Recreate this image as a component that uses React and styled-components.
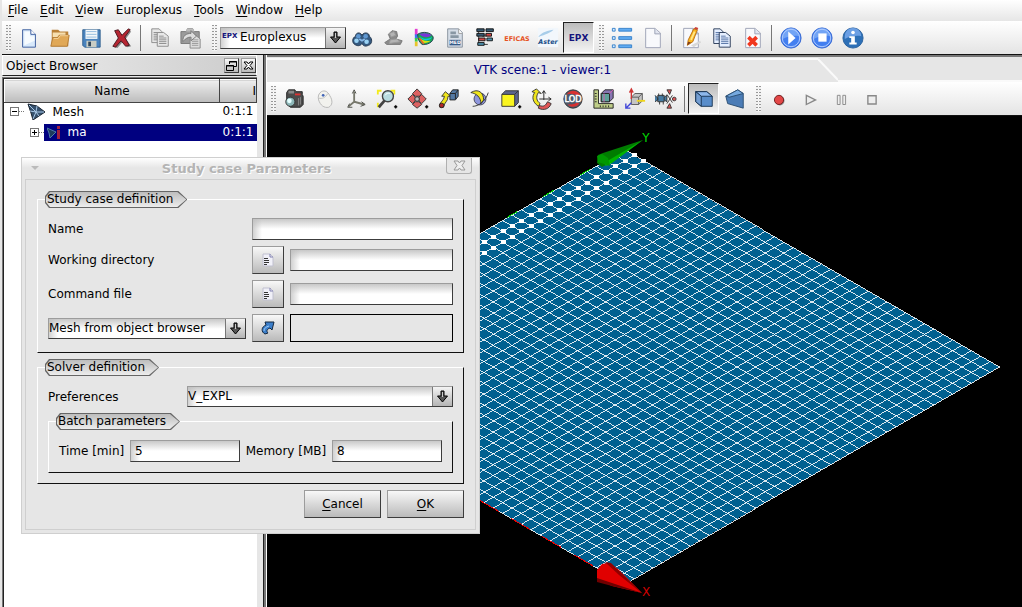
import React, { useState } from "react";
import styled, { createGlobalStyle, css } from "styled-components";

const GlobalStyle = createGlobalStyle`
  * {
    box-sizing: border-box;
  }
  body {
    margin: 0;
    background: #e6e6e6;
    color: #000;
    font-family: "DejaVu Sans", sans-serif;
    font-size: 12px;
    line-height: 16px;
  }
  button,
  input,
  select {
    font: inherit;
    color: inherit;
    margin: 0;
    border-radius: 0;
  }
`;

const raised = css`
  border: 1px solid #9c9c9c;
  border-right-color: #3c3c3c;
  border-bottom-color: #3c3c3c;
  background: linear-gradient(#f8f8f8, #bababa);
`;

const sunken = css`
  border: 1px solid #9c9c9c;
  border-right-color: #3c3c3c;
  border-bottom-color: #3c3c3c;
  background: linear-gradient(90deg, rgba(190, 190, 190, 0.7), rgba(255, 255, 255, 0) 9px),
    linear-gradient(#c8c8c8, #fff 10px);
`;

const Window = styled.div`
  display: flex;
  flex-direction: column;
  height: 100vh;
  overflow: hidden;
  padding-left: 2px;
`;

const MenuBar = styled.nav`
  display: flex;
  gap: 12px;
  height: 21px;
  padding: 2px 6px;
  background: linear-gradient(#fff, #e6e6e6);
  a {
    color: inherit;
    text-decoration: none;
  }
  u {
    text-underline-offset: 2px;
  }
`;

const ToolBar = styled.div`
  display: flex;
  align-items: center;
  flex: none;
  height: ${(props) => props.height}px;
  padding-left: 4px;
  background: linear-gradient(#fff, #e4e4e4);
`;

const MainToolBar = styled(ToolBar)`
  border-bottom: 1px solid #111;
`;

const Handle = styled.span`
  flex: none;
  width: 5px;
  height: 26px;
  margin: 0 ${(props) => props.after || 2}px 0 ${(props) => props.before || 0}px;
  background: repeating-linear-gradient(transparent 0 1px, #f2f2f2 1px 3px),
    linear-gradient(90deg, #999 2px, #fff 2px 3px, #999 3px);
`;

const Separator = styled.span`
  flex: none;
  width: 1px;
  height: 26px;
  margin: 0 3px;
  background: #777;
`;

const ToolButton = styled.button`
  flex: none;
  display: flex;
  align-items: center;
  justify-content: center;
  width: 31px;
  height: 31px;
  padding: 0;
  border: 1px solid transparent;
  background: none;
  ${(props) =>
    props.$pressed &&
    css`
      border-color: #222 #fff #fff #222;
      background: linear-gradient(#bcbcbc, #f4f4f4);
    `}
`;

const ComboBox = styled.span`
  display: grid;
  flex: none;
  height: ${(props) => props.height || 21}px;
  width: ${(props) => props.width || "auto"};
  ${sunken}
  select {
    grid-area: 1 / 1;
    appearance: none;
    min-width: 0;
    padding: 0 20px 1px ${(props) => props.$indent || 0}px;
    border: 0;
    outline: 0;
    background: none;
  }
`;

const ComboArrow = styled.span`
  grid-area: 1 / 1;
  justify-self: end;
  display: flex;
  align-items: center;
  justify-content: center;
  width: 20px;
  border-left: 1px solid #777;
  background: linear-gradient(#f4f4f4, #b4b4b4);
  pointer-events: none;
`;

const ComboMark = styled.span`
  grid-area: 1 / 1;
  padding-left: 1px;
  color: #14147c;
  font-size: 7px;
  font-weight: bold;
  line-height: 17px;
  pointer-events: none;
`;

const EpxLabel = styled.span`
  color: #14147c;
  font-size: 9px;
  font-weight: bold;
`;

const Main = styled.main`
  display: flex;
  flex: 1;
  min-height: 0;
`;

const Dock = styled.aside`
  display: flex;
  flex-direction: column;
  flex: none;
  width: 255px;
`;

const DockTitle = styled.header`
  display: flex;
  align-items: center;
  gap: 2px;
  flex: none;
  height: 21px;
  padding-left: 3px;
  border: 1px solid #fff;
  border-bottom-color: #222;
  background: linear-gradient(90deg, #eee, #ccc);
  h2 {
    flex: 1;
    margin: 0;
    font-size: 12px;
    font-weight: normal;
  }
`;

const DockButton = styled.button`
  display: flex;
  align-items: center;
  justify-content: center;
  width: 15px;
  height: 15px;
  padding: 0;
  ${raised}
`;

const TreeFrame = styled.div`
  flex: 1;
  margin-top: 1px;
  padding: 1px 0 0 1px;
  border-top: 1px solid #777;
  border-left: 1px solid #777;
  box-shadow: inset 1px 1px 0 #222;
  background: #fff;
  overflow: hidden;
`;

const Tree = styled.table`
  width: 100%;
  table-layout: fixed;
  border-collapse: collapse;
  th {
    height: 23px;
    padding: 0;
    border: 1px solid #fff;
    border-right-color: #444;
    border-bottom-color: #444;
    background: linear-gradient(#eee, #bcbcbc);
    font-weight: normal;
    overflow: hidden;
  }
  td {
    height: 21px;
    padding: 0;
    vertical-align: top;
  }
`;

const IdHeader = styled.th`
  width: 37px;
  text-align: right;
`;

const TreeCell = styled.div`
  display: flex;
  align-items: center;
  height: 17px;
  padding-left: ${(props) => props.$depth * 20 + 5}px;
`;

const NodeLabel = styled.span`
  display: flex;
  align-items: center;
  flex: 1;
  height: 17px;
  gap: 7px;
  padding-left: 3px;
  ${(props) => props.$selected && "background: #000080; color: #fff;"}
`;

const IdLabel = styled.div`
  height: 17px;
  padding-left: 3px;
  ${(props) => props.$selected && "background: #000080; color: #fff;"}
`;

const Expander = styled.button`
  display: flex;
  width: 9px;
  height: 9px;
  margin-right: 5px;
  padding: 0;
  border: 1px solid #777;
  background: #fff;
`;

const DottedLine = styled.span`
  width: 5px;
  margin-left: -5px;
  border-top: 1px dotted #777;
`;

const Splitter = styled.div`
  flex: none;
  width: 10px;
  border-right: 1px solid #fff;
  background: linear-gradient(90deg, #e6e6e6 6px, #222 6px 7px, #777 7px);
`;

const Viewer = styled.section`
  display: flex;
  flex-direction: column;
  flex: 1;
  min-width: 0;
  border-top: 2px solid #777;
`;

const TabBar = styled.div`
  display: flex;
  flex: none;
  height: 25px;
  padding-top: 1px;
  button {
    flex: 0 1 551px;
    padding: 0 0 2px;
    border: 0;
    border-top: 2px solid #fafafa;
    background: none;
    color: #000080;
  }
`;

const TabFill = styled.span`
  flex: 1;
  border-bottom: 2px solid #fafafa;
`;

const Scene = styled.div`
  flex: 1;
  min-height: 0;
  border-top: 1px solid #111;
  background: #000;
  > svg {
    display: block;
    width: 100%;
    height: 100%;
  }
`;

const Dialog = styled.form`
  position: absolute;
  left: 21px;
  top: 157px;
  display: flex;
  flex-direction: column;
  width: 459px;
  border: 1px solid #cfcfcf;
  padding: 0 3px 3px;
  background: #e6e6e6;
`;

const DialogTitle = styled.header`
  display: flex;
  align-items: flex-start;
  height: 21px;
  margin: 0 -3px;
  padding: 0 7px 0 9px;
  background: linear-gradient(#fff, #e6e6e6 10px);
  h1 {
    flex: 1;
    margin: 3px 0 0;
    padding-left: 8px;
    color: #b4b4b4;
    font-size: 13px;
    line-height: 16px;
    text-align: center;
    text-shadow: 1px 1px 0 #fff;
  }
  > svg {
    margin-top: 8px;
  }
`;

const DialogClose = styled.button`
  display: flex;
  align-items: center;
  justify-content: center;
  width: 26px;
  height: 16px;
  padding: 0;
  border: 1px solid #b0b0b0;
  border-top: 0;
  border-radius: 0 0 3px 3px;
  background: #e6e6e6;
`;

const DialogBody = styled.div`
  display: flex;
  flex-direction: column;
  border: 1px solid #cfcfcf;
  padding: 11px;
`;

const Group = styled.fieldset`
  min-width: 0;
  margin: ${(props) => props.$top || 0}px 0 0;
  padding: 10px;
  border: 1px solid #fff;
  border-right-color: #111;
  border-bottom-color: #111;
`;

const tagShape = "4px 0, calc(100% - 9px) 0, 100% 50%, calc(100% - 9px) 100%, 4px 100%, 0 calc(100% - 5px), 0 5px";

const Tag = styled.legend`
  height: 17px;
  margin-left: -3px;
  padding: 1px;
  background: #666;
  clip-path: polygon(${tagShape});
  span {
    display: block;
    height: 15px;
    padding: 0 13px 0 1px;
    line-height: 14px;
    background: linear-gradient(#bdbdbd, #ededed);
    clip-path: polygon(${tagShape});
  }
`;

const StudyGrid = styled.div`
  display: grid;
  grid-template-columns: 198px 32px 1fr;
  gap: 6px;
  align-items: center;
`;

const TextInput = styled.input`
  min-width: 0;
  width: 100%;
  height: 22px;
  padding: 0 4px;
  outline: 0;
  ${sunken}
  ${(props) => props.$wide && "grid-column: 2 / 4;"}
`;

const PlainInput = styled.input`
  min-width: 0;
  width: 100%;
  height: 28px;
  border: 1px solid #000;
  outline: 0;
  background: #e6e6e6;
`;

const IconButton = styled.button`
  display: flex;
  align-items: center;
  justify-content: center;
  height: 28px;
  padding: 0;
  ${raised}
`;

const PreferenceRow = styled.div`
  display: grid;
  grid-template-columns: 139px 1fr;
  align-items: center;
`;

const BatchRow = styled.div`
  display: grid;
  grid-template-columns: auto 110px auto 110px;
  justify-content: space-between;
  align-items: center;
`;

const Actions = styled.footer`
  display: flex;
  justify-content: flex-end;
  gap: 6px;
  margin-top: 6px;
`;

const ActionButton = styled.button`
  width: 77px;
  height: 28px;
  padding: 0;
  ${raised}
  u {
    text-underline-offset: 2px;
  }
`;

function Icon({ children }) {
  return (
    <svg width="22" height="22" viewBox="0 0 24 24" overflow="visible" aria-hidden="true">
      {children}
    </svg>
  );
}

const Arrow = () => (
  <svg width="13" height="13" viewBox="0 0 13 13">
    <path d="M5 1h3v5h3.500L6.500 12 1.500 6H5z" fill="#555" stroke="#000" />
    <path d="M6 2h1v5H6z" fill="#ccc" />
  </svg>
);

const fileIcons = {
  New: (
    <g>
      <path d="M5 3h9l5 5v14H5z" fill="#d8e9fb" stroke="#36589a" />
      <path d="M7 5h6v5h5v5L7 20z" fill="#f6fbff" />
      <path d="M14 3v5h5" fill="#fff" stroke="#36589a" />
    </g>
  ),
  Open: (
    <g>
      <path d="M3 3h7l2 2h9v16H3z" fill="#b98138" />
      <path d="M4 6h14v5H4z" fill="#f6dfb0" />
      <path d="M2 21l2-9h5l2-3h11l-2 12z" fill="#e0a857" stroke="#b27a30" />
      <path d="M5 12.500h5l2-3h9" fill="none" stroke="#f8d59a" />
    </g>
  ),
  Save: (
    <g>
      <path d="M3 3h19v19H5l-2-2z" fill="#4a83bd" stroke="#315f8e" />
      <path d="M6 3h13v10H6z" fill="#f6f9fb" />
      <path d="M7 5h11M7 8h11M7 11h11" stroke="#8fb9dc" />
      <path d="M7 15h11v7H7z" fill="#c9cdc4" />
      <path d="M9 16h3v5H9z" fill="#31475c" />
    </g>
  ),
  Delete: (
    <g>
      <path d="M8 5l6 6 6-7 2 1-6 8 6 8-4 1-5-6-6 7-3-1 6-9-5-7z" fill="#888" />
      <path d="M4 4l4-1 4 6 7-7 2 1-6 8 5 9-4 1-5-6-6 7-3-1 6-9z" fill="#b62632" stroke="#44151c" />
    </g>
  ),
};

const clipboardIcons = {
  Copy: (
    <g fill="#e8e8e8" stroke="#8a8a8a">
      <path d="M3 2h8l3 3v12H3z" />
      <path d="M5 6h5M5 8h5M5 10h5M5 12h5M5 14h5" />
      <path d="M9 6h7l5 4v11H9z" />
      <path d="M11 10h5M11 12h8M11 14h8M11 16h8M11 18h8" />
    </g>
  ),
  Paste: (
    <g>
      <path d="M1 5h6l1-3h6l1 3h6v13H1z" fill="#9b9b9b" stroke="#777" />
      <path d="M6 5h10l-2-3H8z" fill="#bbb" />
      <path d="M11 9h6l5 4v10H11z" fill="#ddd" stroke="#888" />
      <path d="M13 14h7M13 16h7M13 18h7M13 20h7" stroke="#999" />
      <path d="M3 16c0-7 4-9 9-9V4l6 6-6 5v-4c-4 0-6 2-9 5z" fill="#ddd" stroke="#777" />
    </g>
  ),
};

const moduleIcons = {
  Geometry: (
    <g>
      <path d="M5 10c0-4 5-5 7-1 2-4 8-3 8 1 4 3 3 9-1 10-4 2-6 0-7-2-2 3-5 3-8 1s-3-7 1-9z" fill="#345980" stroke="#20334a" />
      <circle cx="8" cy="10" r="2.500" fill="#5f97d0" />
      <circle cx="16" cy="10" r="2.500" fill="#5f97d0" />
      <circle cx="6" cy="15" r="2.500" fill="#9ad2f4" />
      <circle cx="17" cy="16" r="2.500" fill="#9ad2f4" />
      <path d="M9 13l3 2 3-2" fill="none" stroke="#88b9e8" strokeWidth="2" />
    </g>
  ),
  Mesh: (
    <g fill="#8a8a8a" stroke="#777">
      <path d="M3 17l6-4-2-5 4-4 5 1 1 5-2 3 7 2-2 4H5z" />
      <path d="M8 7l5-2 2 4-5 2zM9 14l7-1 4 3-12 2z" fill="#b4b4b4" stroke="#999" />
    </g>
  ),
  "Post-Pro": (
    <g>
      <path d="M2 2h3v7H2z" fill="#e33ed1" />
      <path d="M2 8h3v5H2z" fill="#3975f4" />
      <path d="M2 12h3v4H2z" fill="#35cf4c" />
      <path d="M2 16h3v5H2z" fill="#e8c52b" />
      <path d="M5 8c6-4 15-2 17 3 1 6-8 9-12 8-3-2-5-6-5-11z" fill="#17a85a" stroke="#23384e" />
      <path d="M7 8c4-2 11-1 13 1-3 3-9 3-13-1z" fill="#7a35d8" />
      <path d="M7 10c5 4 10 3 14 1-3 5-10 5-14-1z" fill="#0dc6e4" />
      <path d="M6 11l4 6c4 1 7 0 9-2-5 1-9 0-13-4z" fill="#d5df13" />
      <path d="M6 12l4 6 3 1-5-7z" fill="#f25a28" />
    </g>
  ),
  Med: (
    <g>
      <path d="M4 2h12l4 4v16H4z" fill="#d5dde7" stroke="#87919c" />
      <path d="M16 2v5h4" fill="#fff" stroke="#999" />
      <path d="M7 5h6v3H7zM7 9h9v3H7z" fill="#8897a4" />
      <path d="M6 14h12v6H6z" fill="#355987" />
      <text x="12" y="19" fontSize="5" fontWeight="bold" textAnchor="middle" fill="#fff">MED</text>
    </g>
  ),
  Supervision: (
    <g>
      <path d="M4 5v14M12 4h5M8 10h4M11 7v3M8 19h6" stroke="#333" fill="none" />
      <path d="M2 2h8v3H2zM12 2h8v3h-8zM2 7h8v3H2z" fill="#365a74" stroke="#111" />
      <path d="M12 7h6v3h-6zM4 12h7v3H4z" fill="#d54747" stroke="#111" />
      <path d="M3 17h7v3H3zM13 12h6v3h-6z" fill="#4f92af" stroke="#111" />
    </g>
  ),
  Eficas: (
    <text x="12" y="15" fontSize="7" fontWeight="bold" textAnchor="middle" fill="#e65324">EFICAS</text>
  ),
  Aster: (
    <g>
      <path d="M1 1h22v21H1z" fill="#f2f7fc" />
      <path d="M1 11c5-6 11-7 17-8-3 3-8 5-17 8z" fill="#a8cde9" />
      <text x="12" y="19" fontSize="7" fontStyle="italic" fontWeight="bold" textAnchor="middle" fill="#164d87">Aster</text>
    </g>
  ),
};

const sheet = (
  <g>
    <path d="M4 1.500h10l6 5v16H4z" fill="#f8f9fc" stroke="#9aa0b4" />
    <path d="M14 1.500v6h6" fill="#e0e4ef" stroke="#9aa0b4" />
  </g>
);

const studyIcons = {
  List: (
    <g fill="#61acf2" stroke="#327fc9">
      <path d="M1.500 1.500h3v3h-3zM1.500 10.500h3v3h-3zM1.500 19.500h3v3h-3z" fill="#d6ebff" />
      <path d="M8.500 1.500h14v3h-14zM8.500 10.500h14v3h-14zM8.500 19.500h14v3h-14z" />
    </g>
  ),
  Sheet: sheet,
};

const editIcons = {
  "Edit case": (
    <g>
      {sheet}
      <path d="M12 20l10-5 1 2-8 5z" fill="#d8d8d8" />
      <path d="M8 20l1-6 6-12 4 1-5 13z" fill="#f9b51e" stroke="#b96c12" />
      <path d="M12 14l4-9" stroke="#ffe78a" strokeWidth="2" />
      <path d="M15 2l4 1 1-2-3-1z" fill="#ca433a" />
      <path d="M8 20l1-4 3 1z" fill="#7c3b1c" />
    </g>
  ),
  "Copy case": (
    <g fill="#e5efff" stroke="#263855">
      <path d="M3 2h7l4 4v12H3z" />
      <path d="M5 6h5M5 8h6M5 10h6M5 12h6M5 14h6" stroke="#5372a4" />
      <path d="M9 6h7l5 4v12H9z" />
      <path d="M11 10h5M11 12h8M11 14h8M11 16h8M11 18h8" stroke="#5372a4" />
    </g>
  ),
  "Delete case": (
    <g>
      {sheet}
      <path d="M7 11l9 9M16 11l-9 9" stroke="#f1371f" strokeWidth="4" />
    </g>
  ),
};

const Ball = ({ dark, children }) => (
  <g>
    <circle cx="12" cy="12" r="11" fill={dark ? "#2d70b7" : "#437ff0"} stroke={dark ? "#275f9d" : "#2f62d0"} />
    <path d="M3 10a9 9 0 0 1 18 0c-5-1-12 0-18 3z" fill="#86b4f6" opacity=".7" />
    {!dark && <circle cx="12" cy="12" r="9.500" fill="none" stroke="#b7d0ff" />}
    {children}
  </g>
);

const runIcons = {
  Run: (
    <Ball>
      <path d="M9 5l8 7-8 7z" fill="#fff" />
    </Ball>
  ),
  Stop: (
    <Ball>
      <path d="M8 7h9v9H8z" fill="#fff" />
    </Ball>
  ),
  Info: (
    <Ball dark>
      <circle cx="12" cy="6" r="2" fill="#fff" />
      <path d="M8 10h6v7h2v2H8v-2h2v-5H8z" fill="#fff" />
    </Ball>
  ),
};

const menuDot = <path d="M20 20h3v1h-3zM21 19h1v3h-1z" fill="#000" stroke="#000" strokeWidth=".5" />;

const viewIcons = {
  Snapshot: (
    <g>
      <path d="M4 5l2-3h7l1 2h7v3l1 2v9l-3 3H8l-4-4z" fill="#4c4c4c" stroke="#222" />
      <path d="M6 3h6v3H6z" fill="#888" />
      <path d="M13 6h6v2h-6z" fill="#d33" />
      <path d="M19 10v8M17 11v8" stroke="#8a8a8a" />
      <circle cx="8" cy="15" r="5" fill="#8db7b8" stroke="#333" />
      <circle cx="7" cy="14" r="2.500" fill="#e6ffff" />
    </g>
  ),
  Interaction: (
    <g>
      <path d="M8 4c4-2 7 0 9 4 4 6 3 11-1 13-5 1-9-2-11-8-1-4 0-7 3-9z" fill="#f2f2ee" stroke="#b5b5b5" />
      <path d="M5 11c4 1 7 0 10-5" fill="none" stroke="#bbb" />
      <circle cx="10" cy="8" r="1.500" fill="#4266b7" />
    </g>
  ),
  Axes: (
    <g fill="none" stroke="#77786c" strokeWidth="2">
      <path d="M10 4v11l11 3M10 15l-6 5" />
      <path d="M8 6l2-4 2 4M18 15l4 3-5 2M5 17l-2 4 5 0" stroke="#45463f" strokeWidth="1" />
    </g>
  ),
  Zoom: (
    <g>
      <path d="M2 7V3h4M16 3h4v4M2 16v4h3" fill="none" stroke="#f4eb1c" strokeWidth="2" />
      <path d="M10 13l-7 8" stroke="#444" strokeWidth="3" />
      <circle cx="13" cy="9" r="6" fill="#b9dce0" stroke="#444" strokeWidth="1.500" />
      <path d="M10 8c1-2 3-3 5-2" fill="none" stroke="#fff" />
      {menuDot}
    </g>
  ),
  Pan: (
    <g fill="#dd6262" stroke="#333">
      <path d="M11 1l5 5-2 3H9L6 6zM11 22l5-4-3-3H9l-3 3zM1 12l5-5 3 3v4l-3 3zM21 12l-5-5-3 3v4l3 3z" />
      <circle cx="11" cy="12" r="2.500" fill="#bbb" />
      {menuDot}
    </g>
  ),
  "Global pan": (
    <g>
      <path d="M6 21c-1-6 4-6 5-12H8l4-5 6 5h-3c0 6-4 6-5 12z" fill="#efe51c" stroke="#333" transform="translate(-4 0)" />
      <circle cx="4" cy="19" r="2.500" fill="#b12727" stroke="#222" />
      <path d="M13 6l3-4h6v7l-3 4h-6z" fill="#5479a3" stroke="#222" />
      <path d="M13 6h6v6M19 6l3-4" fill="none" stroke="#222" />
    </g>
  ),
  Rotation: (
    <g>
      <circle cx="12" cy="12" r="6.500" fill="#8e96dc" stroke="#445" />
      <path d="M2 5c8-5 14 0 14 8l-3 4c0-7-5-11-11-12z" fill="#efe51c" stroke="#333" />
      <path d="M4 20c6 0 14-5 17-15" fill="none" stroke="#333" />
    </g>
  ),
  "View side": (
    <g stroke="#333">
      <path d="M2 7l4-4h14v13l-4 4z" fill="#5d668e" />
      <path d="M2 7h14v13H2z" fill="#faf51f" />
      <path d="M16 7l4-4" />
      {menuDot}
    </g>
  ),
  Rotate: (
    <g>
      <path d="M8 5c-3 5-2 9 2 12l-2 3C1 15 1 9 4 5L1 4l5-3 5 5z" fill="#efe51c" stroke="#333" />
      <path d="M9 19c5 2 7 0 9-4l4 2c-2 6-8 8-14 5z" fill="#df5555" stroke="#333" />
      <path d="M14 3v10M9 12h12M12 6l2-3 2 3M19 10l3 2-3 2" fill="none" stroke="#222" />
    </g>
  ),
  Lod: (
    <g>
      <circle cx="12" cy="12" r="10" fill="#4e596a" stroke="#333" />
      <path d="M5 7c4-6 11-5 15 0l-3 2c-4-3-8-3-12-2zM6 18c4 4 10 3 13-1l-3-1c-3 2-6 2-10 2z" fill="#d83131" />
      <text x="12" y="15" fontSize="9" textAnchor="middle" fill="#fff" stroke="#fff" strokeWidth=".5">LOD</text>
    </g>
  ),
  Graduated: (
    <g stroke="#222">
      <path d="M1 2h5v15h16v5H1z" fill="#bfce88" />
      <path d="M2 6h2M2 9h2M2 12h2M2 15h2M8 19v2M11 19v2M14 19v2M17 19v2" />
      <path d="M9 6l4-4h9v9l-4 4H9z" fill="#8776b2" />
      <path d="M9 6h9v9H9z" fill="#5ea19b" />
      <path d="M12 6v9M18 6l4-4" stroke="#d95bb1" />
    </g>
  ),
  Scaling: (
    <g fill="none" stroke="#555">
      <path d="M8 10l4-4h8v8l-4 4H8z" fill="#c4c4c4" />
      <path d="M8 10h8v8M16 10l4-4" />
      <path d="M8 2v10M6 5l2-4 2 4" stroke="#cf3535" strokeWidth="1.500" />
      <path d="M14 14h9" stroke="#efd61c" strokeWidth="2" />
      <path d="M8 16l-6 6M2 17v5h5" stroke="#4045d8" strokeWidth="1.500" />
    </g>
  ),
  Parameters: (
    <g stroke="#333">
      <path d="M3 8h7v7H3zM0 8l3 3v2l-3 2M10 10l3-2v7l-3-2" fill="#457aa1" />
      <path d="M4 6v3M8 6v3M5 15v3M9 15v3" />
      <path d="M13 2h5l-2 5zM13 22h5l-2-5z" fill="#d55" />
      <circle cx="21" cy="12" r="2" fill="#d55" />
      <path d="M13 7l6 9M13 17l6-9" />
    </g>
  ),
};

const projectionIcons = {
  Parallel: (
    <g stroke="#173250">
      <path d="M3 4h12l6 5v11H9l-6-5z" fill="#598dca" />
      <path d="M3 4h12l6 5H9z" fill="#8db7eb" />
      <path d="M3 4l6 5v11l-6-5z" fill="#739ed3" />
    </g>
  ),
  Perspective: (
    <g stroke="#294b70">
      <path d="M2 9l13-7 6 4v16L4 17z" fill="#4b7cb6" />
      <path d="M2 9l13-7 6 4-15 4z" fill="#76a9df" />
    </g>
  ),
};

const recordIcons = {
  Record: (
    <g>
      <circle cx="13" cy="14" r="5" fill="#888" />
      <circle cx="12" cy="13" r="5" fill="#e34747" stroke="#6b1b1b" />
    </g>
  ),
  Play: <path d="M8 8l10 5-10 5z" fill="#eee" stroke="#888" strokeWidth="1.500" />,
  Pause: <path d="M8 8h3v10H8zM14 8h3v10h-3z" fill="#eee" stroke="#888" />,
  Halt: <path d="M7.500 8.500h9v9h-9z" fill="#eee" stroke="#888" strokeWidth="1.500" />,
};

function ToolGroup({ icons, pressed }) {
  return Object.keys(icons).map((name) => (
    <ToolButton key={name} type="button" aria-label={name} $pressed={name === pressed}>
      <Icon>{icons[name]}</Icon>
    </ToolButton>
  ));
}

const menus = ["File", "Edit", "View", "Europlexus", "Tools", "Window", "Help"];

// mesh is a 40 x 40 grid seen from the side
const CELLS = 40;
const STEP_X = 9.375;
const STEP_Y = 5.425;
const TOP = { x: 357.5, y: 34 };

const node = (i, j) => ({
  x: TOP.x + (i - j) * STEP_X,
  y: TOP.y + (i + j) * STEP_Y,
});

function MeshScene() {
  const lines = [];
  for (let i = 0; i <= CELLS; i++) {
    const a = node(i, 0);
    const b = node(i, CELLS);
    const c = node(0, i);
    const d = node(CELLS, i);
    lines.push(`M${a.x} ${a.y}L${b.x} ${b.y}M${c.x} ${c.y}L${d.x} ${d.y}`);
  }
  const corners = [node(0, 0), node(CELLS, 0), node(CELLS, CELLS), node(0, CELLS)];
  const points = [];
  for (let j = 0; j < 22; j++) {
    points.push(node(1, j), node(2, j));
  }

  return (
    <svg role="img" aria-label="Mesh">
      <g shapeRendering="crispEdges">
        <polygon points={corners.map((p) => `${p.x},${p.y}`).join(" ")} fill="#006090" />
        <path d={lines.join("")} stroke="#fff" strokeWidth=".86" fill="none" />
        {points.map((p, i) => (
          <rect key={i} x={Math.round(p.x) - 2} y={Math.round(p.y) - 2} width="5" height="4" fill="#fff" />
        ))}
        <path d="M213 384.500L328 451" stroke="#f00000" strokeDasharray="22 14" />
        <path d="M240 101.500L327 51" stroke="#00d000" strokeDasharray="12 30" />
      </g>
      <g transform="translate(0 -1)">
        <path d="M331 40l5-2 40-13-33 23-8 4-5-4z" fill="#007c00" />
        <path d="M337 48l39-23-31 23-6 3z" fill="#00b400" />
        <path d="M330 41l5-2 6 4 2 8-12-4z" fill="#009800" />
        <path d="M330 455l5-6 6-1 10 6 24 24-30-7-15-7z" fill="#e00000" />
        <path d="M338 447l6 1 32 31-24-19z" fill="#900000" />
        <path d="M330 463l45 15-30-7-15-4z" fill="#700000" />
        <text x="379" y="27" fontSize="12" textAnchor="middle" fill="#00d800">Y</text>
        <text x="379" y="481" fontSize="12" textAnchor="middle" fill="#d00000">X</text>
      </g>
    </svg>
  );
}

function ObjectBrowser() {
  return (
    <Dock>
      <DockTitle>
        <h2>Object Browser</h2>
        <DockButton type="button" aria-label="Float">
          <svg width="11" height="11" viewBox="0 0 11 11" fill="none" stroke="#000">
            <path d="M3.500 4V1.500h7v5H8M3 2h8M.5 5.500h7v5h-7zM0 6h8" />
          </svg>
        </DockButton>
        <DockButton type="button" aria-label="Close">
          <svg width="11" height="11" viewBox="0 0 11 11">
            <path d="M1 2h3l1.500 2L7 2h3L7 5.500 10 9H7L5.500 7 4 9H1l3-3.500z" fill="#fff" stroke="#000" />
          </svg>
        </DockButton>
      </DockTitle>
      <TreeFrame>
        <Tree>
          <thead>
            <tr>
              <th>Name</th>
              <IdHeader>I</IdHeader>
            </tr>
          </thead>
          <tbody>
            <tr>
              <td>
                <TreeCell $depth={0}>
                  <Expander type="button" aria-label="Collapse Mesh">
                    <svg width="7" height="7"><path d="M1 3.500h5" stroke="#000" /></svg>
                  </Expander>
                  <DottedLine />
                  <NodeLabel>
                    <svg width="19" height="17" viewBox="0 0 19 17">
                      <path d="M1 1l9 2 8 6-6 4-6 4-2-7z" fill="#35516e" stroke="#182330" />
                      <path d="M2 2l7 7 8 0M9 9l-3 7M3 8l6 1M10 3l-1 6 3 4" stroke="#a8c7e6" fill="none" />
                    </svg>
                    Mesh
                  </NodeLabel>
                </TreeCell>
              </td>
              <td>
                <IdLabel>0:1:1</IdLabel>
              </td>
            </tr>
            <tr>
              <td>
                <TreeCell $depth={1}>
                  <Expander type="button" aria-label="Expand ma">
                    <svg width="7" height="7"><path d="M1 3.500h5M3.500 1v5" stroke="#000" /></svg>
                  </Expander>
                  <DottedLine />
                  <NodeLabel $selected>
                    <svg width="14" height="15" viewBox="0 0 14 15">
                      <path d="M0 3l9 4-6 6-1-5z" fill="#1d3a5c" stroke="#4f7da8" />
                      <path d="M10 5h3v9h-3zM10 1h3v3h-3z" fill="#a02040" />
                    </svg>
                    ma
                  </NodeLabel>
                </TreeCell>
              </td>
              <td>
                <IdLabel $selected>0:1:1</IdLabel>
              </td>
            </tr>
          </tbody>
        </Tree>
      </TreeFrame>
    </Dock>
  );
}

const BrowseIcon = () => (
  <svg width="14" height="14" viewBox="0 0 14 14">
    <path d="M2 1h7l3 3v9H2z" fill="#f0f0f8" stroke="#c0c0d0" />
    <path d="M9 1v3h3" fill="none" stroke="#8080b0" />
    <path d="M3 5.500h4M3 7.500h5M3 9.500h5M3 11.500h3" stroke="#333" />
  </svg>
);

function StudyCaseDialog() {
  const [time, setTime] = useState("5");
  const [memory, setMemory] = useState("8");

  return (
    <Dialog onSubmit={(e) => e.preventDefault()}>
      <DialogTitle>
        <svg width="8" height="5"><path d="M0 0h8L4 4z" fill="#bbb" /></svg>
        <h1>Study case Parameters</h1>
        <DialogClose type="button" aria-label="Close dialog">
          <svg width="13" height="11" viewBox="0 0 13 11">
            <path d="M1 1h4l1.500 2L8 1h4L9 5.500l3 4.500H8L6.500 8 5 10H1l3-4.500z" fill="#eee" stroke="#999" />
          </svg>
        </DialogClose>
      </DialogTitle>
      <DialogBody>
        <Group>
          <Tag>
            <span>Study case definition</span>
          </Tag>
          <StudyGrid>
            <label htmlFor="name">Name</label>
            <TextInput id="name" $wide />
            <label htmlFor="directory">Working directory</label>
            <IconButton type="button" aria-label="Browse directory">
              <BrowseIcon />
            </IconButton>
            <TextInput id="directory" />
            <label htmlFor="command">Command file</label>
            <IconButton type="button" aria-label="Browse command file">
              <BrowseIcon />
            </IconButton>
            <TextInput id="command" />
            <ComboBox>
              <select aria-label="Mesh source">
                <option>Mesh from object browser</option>
              </select>
              <ComboArrow>
                <Arrow />
              </ComboArrow>
            </ComboBox>
            <IconButton type="button" aria-label="Take selection">
              <svg width="16" height="16" viewBox="0 0 16 16">
                <path d="M5 14c-4-2-4-7 1-9l-1-3h9l-2 8-2-2c-3 1-4 3-2 5z" fill="#3c7fcb" stroke="#14283f" />
                <path d="M4 11c0-3 2-4 5-5" fill="none" stroke="#9bcaf5" />
              </svg>
            </IconButton>
            <PlainInput aria-label="Selected mesh" readOnly />
          </StudyGrid>
        </Group>
        <Group $top={6}>
          <Tag>
            <span>Solver definition</span>
          </Tag>
          <PreferenceRow>
            <label htmlFor="preferences">Preferences</label>
            <ComboBox>
              <select id="preferences">
                <option>V_EXPL</option>
              </select>
              <ComboArrow>
                <Arrow />
              </ComboArrow>
            </ComboBox>
          </PreferenceRow>
          <Group $top={6}>
            <Tag>
              <span>Batch parameters</span>
            </Tag>
            <BatchRow>
              <label htmlFor="time">Time [min]</label>
              <TextInput id="time" value={time} onChange={(e) => setTime(e.target.value)} />
              <label htmlFor="memory">Memory [MB]</label>
              <TextInput id="memory" value={memory} onChange={(e) => setMemory(e.target.value)} />
            </BatchRow>
          </Group>
        </Group>
        <Actions>
          <ActionButton type="button">
            <u>C</u>ancel
          </ActionButton>
          <ActionButton type="submit">
            <u>O</u>K
          </ActionButton>
        </Actions>
      </DialogBody>
    </Dialog>
  );
}

function App() {
  return (
    <>
      <GlobalStyle />
      <Window>
        <MenuBar>
          {menus.map((name) =>
            name === "Europlexus" ? (
              <a key={name} href="#europlexus">{name}</a>
            ) : (
              <a key={name} href={`#${name.toLowerCase()}`}>
                <u>{name[0]}</u>
                {name.slice(1)}
              </a>
            )
          )}
        </MenuBar>
        <MainToolBar height={34}>
          <Handle />
          <ToolGroup icons={fileIcons} />
          <Separator />
          <ToolGroup icons={clipboardIcons} />
          <Handle before={6} after={3} />
          <ComboBox width="126px" height={22} $indent={19}>
            <ComboMark>EPX</ComboMark>
            <select aria-label="Module">
              <option>Europlexus</option>
            </select>
            <ComboArrow>
              <Arrow />
            </ComboArrow>
          </ComboBox>
          <ToolGroup icons={moduleIcons} />
          <ToolButton type="button" $pressed>
            <EpxLabel>EPX</EpxLabel>
          </ToolButton>
          <Handle before={5} />
          <ToolGroup icons={studyIcons} />
          <Separator />
          <ToolGroup icons={editIcons} />
          <Separator />
          <ToolGroup icons={runIcons} />
        </MainToolBar>
        <Main>
          <ObjectBrowser />
          <Splitter />
          <Viewer>
            <TabBar>
              <button type="button">VTK scene:1 - viewer:1</button>
              <svg width="20" height="24">
                <path d="M0 1L20 22" stroke="#fafafa" strokeWidth="2" />
              </svg>
              <TabFill />
            </TabBar>
            <ToolBar height={33}>
              <Handle />
              <ToolGroup icons={viewIcons} />
              <Separator />
              <ToolGroup icons={projectionIcons} pressed="Parallel" />
              <Handle before={6} />
              <ToolGroup icons={recordIcons} />
            </ToolBar>
            <Scene>
              <MeshScene />
            </Scene>
          </Viewer>
        </Main>
      </Window>
      <StudyCaseDialog />
    </>
  );
}

export default App;
